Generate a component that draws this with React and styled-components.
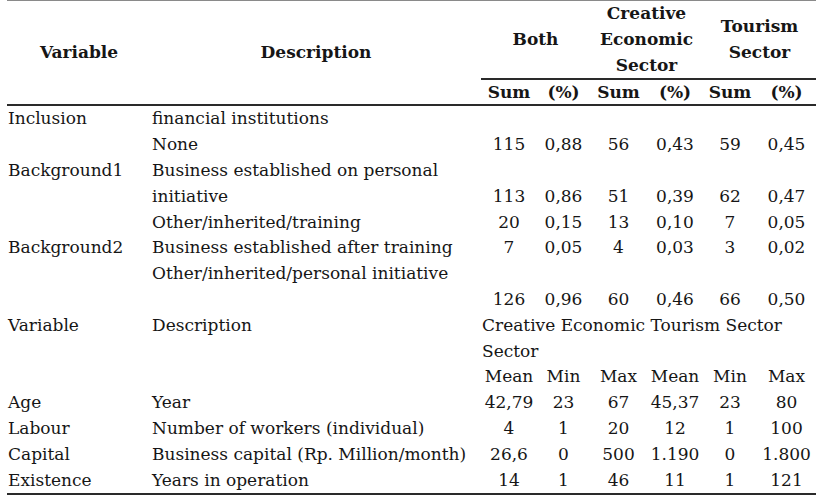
import React from 'react';
import styled, { createGlobalStyle } from 'styled-components';

const GlobalStyle = createGlobalStyle`
  html, body {
    margin: 0;
    padding: 0;
    background: #ffffff;
  }
  body {
    font-family: 'DejaVu Serif', 'Liberation Serif', serif;
    color: #161616;
  }
`;

const Page = styled.div`
  width: 816px;
  height: 497px;
  overflow: hidden;
  padding-left: 7px;
  box-sizing: border-box;
`;

const Table = styled.table`
  width: 809px;
  border-collapse: collapse;
  table-layout: fixed;
  font-size: 17px;
  line-height: 25.8px;
  border-top: 1px solid #8a8a8a;
`;

const HeadCell = styled.th`
  font-weight: bold;
  text-align: center;
  vertical-align: middle;
  padding: 0;
  white-space: nowrap;
  line-height: ${(p) => (p.$short ? '24px' : '25.8px')};
  border-bottom: ${(p) => (p.$rule ? '2px solid #2a2a2a' : 'none')};
`;

const Row = styled.tr`
  border-bottom: ${(p) => (p.$last ? '2px solid #2a2a2a' : 'none')};
`;

const Cell = styled.td`
  padding: 0 0 0 1px;
  text-align: left;
  white-space: nowrap;
  vertical-align: top;
`;

const NumCell = styled.td`
  padding: 0;
  text-align: center;
  white-space: nowrap;
  vertical-align: top;
`;

const SpanCell = styled.td`
  padding: 0 0 0 1px;
  text-align: left;
  white-space: nowrap;
`;

const colWidths = [144, 330, 56, 53, 57, 56, 54, 59];

const countRows = [
  ['Inclusion', 'financial institutions', null],
  ['', 'None', ['115', '0,88', '56', '0,43', '59', '0,45']],
  ['Background1', 'Business established on personal', null],
  ['', 'initiative', ['113', '0,86', '51', '0,39', '62', '0,47']],
  ['', 'Other/inherited/training', ['20', '0,15', '13', '0,10', '7', '0,05']],
  ['Background2', 'Business established after training', ['7', '0,05', '4', '0,03', '3', '0,02']],
  ['', 'Other/inherited/personal initiative', null],
  ['', '', ['126', '0,96', '60', '0,46', '66', '0,50']],
];

const statRows = [
  ['Age', 'Year', ['42,79', '23', '67', '45,37', '23', '80']],
  ['Labour', 'Number of workers (individual)', ['4', '1', '20', '12', '1', '100']],
  ['Capital', 'Business capital (Rp. Million/month)', ['26,6', '0', '500', '1.190', '0', '1.800']],
  ['Existence', 'Years in operation', ['14', '1', '46', '11', '1', '121']],
];

const DataRow = ({ variable, description, values, last }) => (
  <Row $last={last}>
    <Cell>{variable}</Cell>
    <Cell>{description}</Cell>
    {values
      ? values.map((v, i) => <NumCell key={i}>{v}</NumCell>)
      : [0, 1, 2, 3, 4, 5].map((i) => <NumCell key={i} />)}
  </Row>
);

const App = () => {
  return (
    <>
      <GlobalStyle />
      <Page>
        <Table>
          <colgroup>
            {colWidths.map((w, i) => (
              <col key={i} style={{ width: w }} />
            ))}
          </colgroup>
          <thead>
            <tr>
              <HeadCell rowSpan={2} $rule>Variable</HeadCell>
              <HeadCell rowSpan={2} $rule>Description</HeadCell>
              <HeadCell colSpan={2} $rule>Both</HeadCell>
              <HeadCell colSpan={2} $rule>
                Creative
                <br />
                Economic
                <br />
                Sector
              </HeadCell>
              <HeadCell colSpan={2} $rule>
                Tourism
                <br />
                Sector
              </HeadCell>
            </tr>
            <tr>
              {['Sum', '(%)', 'Sum', '(%)', 'Sum', '(%)'].map((h, i) => (
                <HeadCell key={i} $rule $short>{h}</HeadCell>
              ))}
            </tr>
          </thead>
          <tbody>
            {countRows.map(([v, d, vals], i) => (
              <DataRow key={'c' + i} variable={v} description={d} values={vals} />
            ))}
            <Row>
              <Cell>Variable</Cell>
              <Cell>Description</Cell>
              <SpanCell colSpan={6}>Creative Economic Tourism Sector</SpanCell>
            </Row>
            <Row>
              <Cell />
              <Cell />
              <SpanCell colSpan={6}>Sector</SpanCell>
            </Row>
            <DataRow variable="" description="" values={['Mean', 'Min', 'Max', 'Mean', 'Min', 'Max']} />
            {statRows.map(([v, d, vals], i) => (
              <DataRow
                key={'s' + i}
                variable={v}
                description={d}
                values={vals}
                last={i === statRows.length - 1}
              />
            ))}
          </tbody>
        </Table>
      </Page>
    </>
  );
};

export default App;
